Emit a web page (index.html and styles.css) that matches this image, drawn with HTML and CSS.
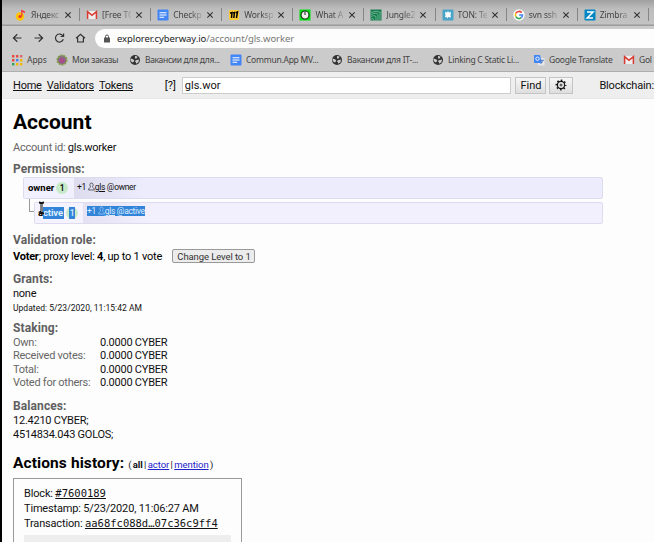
FILE: index.html
```
<!DOCTYPE html>
<html lang="en">
<head>
<meta charset="utf-8">
<title>Account gls.worker</title>
<link rel="stylesheet" href="styles.css">
</head>
<body>
<svg class="defs" width="0" height="0" aria-hidden="true">
  <symbol id="globe" viewBox="0 0 12 12"><circle cx="6" cy="6" r="5" fill="#333"/><path d="M1.500 4.500 4 5.200 5.300 6.500 4.300 8.200 3 8.200 1.600 6.500zM6 2 8.600 2.600 7.600 4.400 6 4.600zM7 6.300 10 5.600 9.500 8.200 7.200 9.800 7 8.200 5.800 7.200z" fill="#ccc"/></symbol>
  <symbol id="doc" viewBox="0 0 12 12"><rect x=".5" y=".5" width="11" height="11" rx="1" fill="#4285f4"/><path d="M2.500 3.700h7M2.500 6h7M2.500 8.300h4.700" stroke="#fff" stroke-width="1.100"/></symbol>
  <symbol id="gmail" viewBox="0 0 12 12"><path d="M1 2h10v8H1z" fill="#eee"/><path d="M1.600 10V2.600L6 6.300l4.400-3.700V10" fill="none" stroke="#d93a30" stroke-width="1.500"/></symbol>
  <symbol id="person" viewBox="0 0 8 10"><path d="M2.800 5Q2 3.800 2.200 2.600 2.500 1 4 1t1.800 1.600Q6 3.800 5.200 5 5 6 6.200 6.600 7.300 7.200 7.300 9H.7Q.7 7.200 1.800 6.600 3 6 2.800 5z" fill="none" stroke="currentColor" stroke-width=".7"/></symbol>
  <symbol id="close" viewBox="0 0 8 8"><path d="m1.300 1.300 5.400 5.400m0-5.400L1.300 6.700" stroke="#333" stroke-width="1.100"/></symbol>
</svg>
<div class="browser">
  <div class="tabs">
    <div class="tab"><svg class="ico" viewBox="0 0 12 12"><circle cx="5" cy="7.500" r="4.200" fill="#ffc400"/><circle cx="5" cy="7.500" r="1.600" fill="#e33"/><path d="M6.200 7.500V.5L10 2.600V4L7.400 3v4.500z" fill="#e33"/></svg><span>Яндекс</span><svg class="x"><use href="#close"/></svg></div>
    <div class="tab"><svg class="ico"><use href="#gmail"/></svg><span>[Free TC</span><svg class="x"><use href="#close"/></svg></div>
    <div class="tab"><svg class="ico"><use href="#doc"/></svg><span>Checkp</span><svg class="x"><use href="#close"/></svg></div>
    <div class="tab"><svg class="ico" viewBox="0 0 12 12"><rect x="1" y="1" width="10" height="10" rx="1" fill="#fc3"/><path d="M2 4.300 4 3.600 3.500 9M5 4l1.500-.5L5.800 9M7.800 3.800 9.500 3 8.400 9" fill="none" stroke="#000" stroke-width="1.500"/></svg><span>Worksp</span><svg class="x"><use href="#close"/></svg></div>
    <div class="tab"><svg class="ico" viewBox="0 0 12 12"><rect x=".5" y=".5" width="11" height="11" fill="#00df13"/><circle cx="6" cy="6" r="4" fill="#eee" stroke="#163b16" stroke-width="1.200"/><path d="M6 2.500V6" stroke="#222"/></svg><span>What A</span><svg class="x"><use href="#close"/></svg></div>
    <div class="tab"><svg class="ico" viewBox="0 0 12 12"><rect x=".5" y=".5" width="11" height="11" fill="#197a4e"/><path d="M1 3.500Q6 1 11 3.500M1 5.500q5-2.500 7 0v6M1 7.500q3-2 5 0v4M10 4v7.500M1 10q2-2 3 1.500" fill="none" stroke="#83c9a3" stroke-width=".7"/></svg><span>Jungle2</span><svg class="x"><use href="#close"/></svg></div>
    <div class="tab"><svg class="ico" viewBox="0 0 12 12"><rect x=".5" y=".5" width="11" height="11" rx="1" fill="#4ba3c7"/><path d="m3 3 2 .5L6 2l1 1.500L9 3l-.5 3L9 8.500 6.500 8 5 9.500 4.700 8 3 8.300 3.500 6z" fill="#fff"/></svg><span>TON: Te</span><svg class="x"><use href="#close"/></svg></div>
    <div class="tab"><svg class="ico" viewBox="0 0 12 12"><circle cx="6" cy="6" r="5.700" fill="#fff"/><g fill="none" stroke-width="1.600"><path d="M8.700 3.600A3.600 3.600 0 0 0 2.800 4.400" stroke="#ea4335"/><path d="M2.800 4.400a3.600 3.600 0 0 0 0 3.200" stroke="#fbbc05"/><path d="M2.800 7.600a3.600 3.600 0 0 0 5.600 1.100" stroke="#34a853"/><path d="M8.400 8.700A3.600 3.600 0 0 0 9.500 6H6.200" stroke="#4285f4"/></g></svg><span>svn ssh</span><svg class="x"><use href="#close"/></svg></div>
    <div class="tab"><svg class="ico" viewBox="0 0 12 12"><rect x=".5" y=".5" width="11" height="11" rx="1" fill="#0087c3"/><path d="M3 3h6L3.200 9H9" fill="none" stroke="#fff" stroke-width="1.500"/></svg><span>Zimbra</span><svg class="x"><use href="#close"/></svg></div>
  </div>
  <div class="toolbar">
    <svg class="nav" viewBox="0 0 80 14"><g fill="none" stroke="#333" stroke-width="1.200"><path d="M9.500 7H1.500M5.300 3.200 1.400 7l3.900 3.800M22.500 7h8M26.700 3.200 30.600 7l-3.900 3.800M51 5.100A4 4 0 1 0 51.300 8.200M51.600 2.500v3h-3M64 7.200 68.500 3.200 73 7.200M65.600 6.500v4.500h5.800V6.500"/></g></svg>
    <div class="address"><svg class="lock" viewBox="0 0 8 9"><rect x="1" y="3.600" width="6" height="5" rx=".6" fill="#555"/><path d="M2.500 4V2.500a1.500 1.500 0 0 1 3 0V4" fill="none" stroke="#555"/></svg><span>explorer.cyberway.io<i>/account/gls.worker</i></span></div>
  </div>
  <div class="bookmarks">
    <div class="bm b1"><svg class="ico" viewBox="0 0 12 12"><path d="M1 1h2.400v2.400H1zM5 1h2.400v2.400H5zM1 5h2.400v2.400H1z" fill="#e84b3c"/><path d="M9 1h2.400v2.400H9z" fill="#d66"/><path d="M5 5h2.400v2.400H5z" fill="#4285f4"/><path d="M9 5h2.400v2.400H9zM5 9h2.400v2.400H5z" fill="#f4b400"/><path d="M1 9h2.400v2.400H1z" fill="#2fa35a"/><path d="M9 9h2.400v2.400H9z" fill="#f4b400"/></svg><span>Apps</span></div>
    <div class="bm b2"><svg class="ico" viewBox="0 0 12 12"><circle cx="6" cy="6" r="4.600" fill="#8b6b86" stroke="#7b9b43" stroke-width="1.800" stroke-dasharray="2 .8"/><path d="M3 6q2-4 5-1t-1 4-4-3z" fill="#a54f8c"/></svg><span>Мои заказы</span></div>
    <div class="bm b3"><svg class="ico"><use href="#globe"/></svg><span>Вакансии для для...</span></div>
    <div class="bm b4"><svg class="ico"><use href="#doc"/></svg><span>Commun.App MV...</span></div>
    <div class="bm b5"><svg class="ico"><use href="#globe"/></svg><span>Вакансии для IT-...</span></div>
    <div class="bm b6"><svg class="ico"><use href="#globe"/></svg><span>Linking C Static Li...</span></div>
    <div class="bm b7"><svg class="ico" viewBox="0 0 12 12"><rect x="5" y="4" width="6.500" height="7.500" rx=".7" fill="#e4e7ea"/><path d="M1 1h6l2 8H1.700Q1 9 1 8z" fill="#4285f4"/><circle cx="4.500" cy="4.700" r="1.700" fill="none" stroke="#fff" stroke-width=".9"/><path d="M7.500 6.300h3.500M9.500 6.500Q9 9 7.500 10" stroke="#46a" fill="none" stroke-width=".8"/></svg><span>Google Translate</span></div>
    <div class="bm b8"><svg class="ico"><use href="#gmail"/></svg><span>Gol</span></div>
  </div>
</div>
<header class="head">
  <nav><a>Home</a><a>Validators</a><a>Tokens</a></nav>
  <span class="help">[?]</span>
  <input class="search" value="gls.wor" aria-label="Search">
  <button class="find">Find</button>
  <button class="gear" aria-label="Settings"><svg viewBox="0 0 12 12"><circle cx="6" cy="6" r="3.600" fill="none" stroke="#111" stroke-width="1.200"/><circle cx="6" cy="6" r="1" fill="none" stroke="#111" stroke-width=".8"/><circle cx="6" cy="6" r="4.700" fill="none" stroke="#111" stroke-width="1.500" stroke-dasharray="1.600 2.091" stroke-dashoffset=".8"/></svg></button>
  <span class="chain">Blockchain:</span>
</header>
<main>
  <h1>Account</h1>
  <p class="id"><span class="dim">Account id:</span> gls.worker</p>
  <h3 class="perm-title">Permissions:</h3>
  <div class="perm owner">
    <div class="name"><b>owner</b><span class="count">1</span></div>
    <div class="auth">+1 <svg class="person"><use href="#person"/></svg><u>gls</u> @owner</div>
  </div>
  <div class="branch">
    <div class="elbow"></div>
    <div class="perm active">
      <div class="name"><b>a<span class="sel">ctive</span></b><span class="count"><mark>1</mark></span></div>
      <div class="auth"><span class="sel">+1 <svg class="person"><use href="#person"/></svg><u>gls</u> @active</span></div>
      <svg class="cursor" viewBox="0 0 7 14"><path d="M1 1.500Q3 1.500 3.500 3 4 1.500 6 1.500M3.500 3v8M1 12.500Q3 12.500 3.500 11 4 12.500 6 12.500" fill="none" stroke="#111" stroke-width="2"/><path d="M3.500 3v8" stroke="#aaa" stroke-width=".7"/></svg>
    </div>
  </div>
  <h3 class="role-title">Validation role:</h3>
  <div class="role"><span><b>Voter</b>; proxy level: <b>4</b>, up to 1 vote</span><button class="level">Change Level to 1</button></div>
  <h3 class="grants-title">Grants:</h3>
  <p class="none">none</p>
  <p class="updated">Updated: 5/23/2020, 11:15:42 AM</p>
  <h3 class="staking-title">Staking:</h3>
  <dl class="staking">
    <dt>Own:</dt><dd>0.0000 CYBER</dd>
    <dt>Received votes:</dt><dd>0.0000 CYBER</dd>
    <dt>Total:</dt><dd>0.0000 CYBER</dd>
    <dt>Voted for others:</dt><dd>0.0000 CYBER</dd>
  </dl>
  <h3 class="balances-title">Balances:</h3>
  <p class="balance">12.4210 CYBER;</p>
  <p class="balance">4514834.043 GOLOS;</p>
  <div class="history"><h2>Actions history:</h2><span class="filter">( <b>all</b> | <a>actor</a> | <a>mention</a> )</span></div>
  <section class="action">
    <p>Block: <code>#7600189</code></p>
    <p>Timestamp: 5/23/2020, 11:06:27 AM</p>
    <p>Transaction: <code>aa68fc088d…07c36c9ff4</code></p>
    <div class="data"></div>
  </section>
</main>
</body>
</html>
```
FILE: styles.css
```
* { box-sizing: border-box; }
body { margin: 0; height: 542px; overflow: hidden; border-left: 2px solid #000; background: #fdfdfd; color: #111; font-family: Roboto, sans-serif; font-size: 11px; white-space: nowrap; }
.defs { position: absolute; }
h1, h2, h3, p, dl, dd { margin: 0; }
.browser { height: 72px; background: #cbcbcb; border-bottom: 1px solid #aeaeae; font-family: "Noto Sans", sans-serif; color: #444; overflow: hidden; }
.tabs { display: flex; height: 26px; padding: 4px 0 0 13px; background: linear-gradient(#a0a0a0, #bdbdbd 35%, #c3c3c3 92%, #9c9c9c 96%); }
.tab { flex: none; display: flex; align-items: center; width: 71.100px; height: 21px; position: relative; font-size: 8.500px; letter-spacing: -.15px; }
.tab::after { content: ""; position: absolute; right: 6px; top: 4px; width: 1px; height: 13px; background: #858585; }
.ico { flex: none; width: 12px; height: 12px; }
.tab span { flex: none; width: 29px; margin: 0 4px 0 4px; -webkit-mask-image: linear-gradient(90deg, #000 60%, rgba(0,0,0,.2)); mask-image: linear-gradient(90deg, #000 60%, rgba(0,0,0,.2)); }
.x { flex: none; width: 8px; height: 8px; }
.toolbar { display: flex; align-items: center; height: 22px; margin-top: 1px; padding-left: 9.500px; }
.nav { flex: none; width: 80px; height: 14px; }
.address { flex: none; display: flex; align-items: center; width: 640px; height: 19px; margin-left: 3px; padding-left: 8px; border-radius: 10px; background: #fdfdfd; font-size: 9.500px; letter-spacing: -.08px; color: #222; }
.lock { width: 8px; height: 9px; margin-right: 6.500px; }
.address i { font-style: normal; color: #777; }
.bookmarks { display: grid; grid-template-columns: 45px 73px 101px 101px 101px 101px 90px 60px; height: 22px; padding-left: 9px; }
.bm { display: flex; align-items: center; padding-bottom: 1px; font-size: 8.500px; letter-spacing: -.25px; }
.bm span { margin-left: 4px; }
.b1 { letter-spacing: -.05px; }
.b3 { letter-spacing: -.33px; }
.head { display: flex; align-items: center; height: 27px; padding-left: 11px; background: #eee; border-bottom: 1px solid #e8e8e8; }
.head nav { display: flex; gap: 5px; width: 152px; letter-spacing: -.22px; }
.head a { text-decoration: underline; }
.help { width: 16px; }
.search { width: 330px; height: 17px; margin-left: 1px; border: 1px solid #ccc; padding: 0 2px; background: #fff; font: 11px Roboto, sans-serif; color: #111; }
button { font-family: Roboto, sans-serif; color: #111; padding: 0; }
.find, .gear { height: 17px; border: 1px solid #c4c4c4; background: linear-gradient(#f6f6f6, #dedede); font-size: 11px; }
.find { width: 31px; margin-left: 4px; }
.gear { width: 24px; margin-left: 3px; display: grid; place-items: center; }
.gear svg { width: 12px; height: 12px; }
.chain { margin-left: 26px; letter-spacing: -.15px; }
main { padding-left: 11px; letter-spacing: -.24px; }
h1 { height: 29px; margin-top: 9px; font-size: 21px; line-height: 29px; letter-spacing: 0; color: #000; }
.id { height: 20px; line-height: 21px; }
.dim, dt { color: #666; }
h3 { font-size: 12px; line-height: 18px; height: 16px; letter-spacing: .1px; color: #606060; }
.perm-title { margin-top: 3px; }
.perm { display: flex; height: 22px; border: 1px solid #dddcee; border-radius: 2px; background: #ececfc; }
.owner { width: 580px; margin: 1px 0 0 10px; }
.name { display: flex; align-items: center; width: 50px; padding: 0 0 1px 4px; font-size: 9.500px; letter-spacing: 0; background: #f0f0ff; color: #000; }
.count { display: grid; place-items: center; width: 12px; height: 12px; margin-left: 2px; border-radius: 6px; background: #c7eac9; font-size: 8.500px; font-weight: 500; }
.auth { padding: 4px 0 0 3px; font-size: 8.500px; line-height: 10px; letter-spacing: -.32px; flex: 1; background: linear-gradient(90deg, #dcdcee, transparent 70px); }
.person { width: 7px; height: 9px; vertical-align: -1px; }
.branch { display: flex; margin: 3px 0 0 16px; }
.elbow { width: 5px; height: 13px; margin-top: -3px; border: solid #999; border-width: 0 0 1px 1px; }
.active { position: relative; width: 569px; background: #f2f0fc; }
.active .auth { padding: 3px 0 0 4px; background: linear-gradient(90deg, #e4e2f2, transparent 70px); }
.active .name { width: 48px; padding-left: 3px; letter-spacing: -.1px; background: #f5f3ff; }
.sel, mark { background: #3284d8; color: #dcecff; }
.name .sel { display: inline-block; line-height: 12px; padding-right: 1px; }
mark { line-height: 12px; padding: 0 1px; }
.active .person { color: #b9dcff; }
.cursor { position: absolute; left: 3px; top: -2px; width: 7px; height: 14px; }
.role-title { margin-top: 7px; }
.role { display: flex; align-items: center; height: 17px; padding-top: 1px; color: #000; }
.level { width: 83px; height: 14px; margin-left: 10.500px; border: 1px solid #999; border-radius: 2px; background: #ececec; color: #333; font-size: 9.500px; letter-spacing: -.1px; line-height: 11px; }
.grants-title { margin-top: 6px; }
.none { height: 15px; line-height: 16px; }
.updated { height: 13px; line-height: 14px; font-size: 8.500px; letter-spacing: 0.030px; }
.staking-title { margin-top: 5px; }
.staking { display: grid; grid-template-columns: 87px 100px; grid-auto-rows: 13.400px; line-height: 15px; }
dt { letter-spacing: -.26px; }
.balances-title { margin-top: 8px; }
.balance { height: 14px; line-height: 16px; }
.history { display: flex; align-items: baseline; height: 24px; margin-top: 9px; }
h2 { font-size: 15.500px; line-height: 26px; letter-spacing: .1px; color: #000; }
.filter { margin-left: 4px; font-size: 9.500px; letter-spacing: -.04px; word-spacing: -1px; }
.filter a { color: #2222cc; text-decoration: underline; }
.action { width: 229px; height: 80px; margin-top: 4px; padding: 7px 10px; border: 1px solid #999; }
.action p { height: 15px; line-height: 15px; letter-spacing: -.17px; }
code { font: 10.500px "DejaVu Sans Mono", monospace; letter-spacing: 0; text-decoration: underline; }
.data { height: 20px; margin-top: 4px; background: #eee; }
```
